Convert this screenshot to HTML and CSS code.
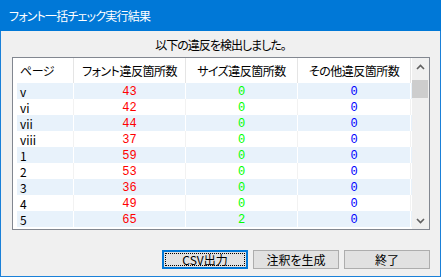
FILE: index.html
```html
<!DOCTYPE html>
<html lang="ja">

<head>
    <meta charset="utf-8">
    <title>フォント一括チェック実行結果</title>
    <link rel="stylesheet" href="styles.css">
</head>

<body>

    <div class="window">
        <div class="titlebar">フォント一括チェック実行結果</div>

        <div class="client">
            <p class="caption">以下の違反を検出しました。</p>

            <div class="listbox">
                <div class="list">
                    <div class="row head">
                        <span class="cell page">ページ</span>
                        <span class="cell">フォント違反箇所数</span>
                        <span class="cell">サイズ違反箇所数</span>
                        <span class="cell">その他違反箇所数</span>
                    </div>
                    <div class="row alt">
                        <span class="cell page">v</span>
                        <span class="cell num red">43</span>
                        <span class="cell num green">0</span>
                        <span class="cell num blue">0</span>
                    </div>
                    <div class="row">
                        <span class="cell page">vi</span>
                        <span class="cell num red">42</span>
                        <span class="cell num green">0</span>
                        <span class="cell num blue">0</span>
                    </div>
                    <div class="row alt">
                        <span class="cell page">vii</span>
                        <span class="cell num red">44</span>
                        <span class="cell num green">0</span>
                        <span class="cell num blue">0</span>
                    </div>
                    <div class="row">
                        <span class="cell page">viii</span>
                        <span class="cell num red">37</span>
                        <span class="cell num green">0</span>
                        <span class="cell num blue">0</span>
                    </div>
                    <div class="row alt">
                        <span class="cell page">1</span>
                        <span class="cell num red">59</span>
                        <span class="cell num green">0</span>
                        <span class="cell num blue">0</span>
                    </div>
                    <div class="row">
                        <span class="cell page">2</span>
                        <span class="cell num red">53</span>
                        <span class="cell num green">0</span>
                        <span class="cell num blue">0</span>
                    </div>
                    <div class="row alt">
                        <span class="cell page">3</span>
                        <span class="cell num red">36</span>
                        <span class="cell num green">0</span>
                        <span class="cell num blue">0</span>
                    </div>
                    <div class="row">
                        <span class="cell page">4</span>
                        <span class="cell num red">49</span>
                        <span class="cell num green">0</span>
                        <span class="cell num blue">0</span>
                    </div>
                    <div class="row alt">
                        <span class="cell page">5</span>
                        <span class="cell num red">65</span>
                        <span class="cell num green">2</span>
                        <span class="cell num blue">0</span>
                    </div>
                </div>

                <div class="scrollbar">
                    <div class="arrow">
                        <svg width="9" height="6" viewBox="0 0 9 6"><path d="M1 5 L4.5 1.5 L8 5" fill="none" stroke="#606060" stroke-width="1.6"/></svg>
                    </div>
                    <div class="track">
                        <div class="thumb"></div>
                    </div>
                    <div class="arrow">
                        <svg width="9" height="6" viewBox="0 0 9 6"><path d="M1 1 L4.5 4.5 L8 1" fill="none" stroke="#606060" stroke-width="1.6"/></svg>
                    </div>
                </div>
            </div>

            <div class="buttons">
                <button class="btn default"><span class="focus">CSV出力</span></button>
                <button class="btn">注釈を生成</button>
                <button class="btn">終了</button>
            </div>
        </div>
    </div>

</body></html>
```

FILE: styles.css
```css
body {
    margin: 0;
    font-family: "Noto Sans CJK JP", sans-serif;
    font-feature-settings: "palt";
    font-size: 12px;
}

.window {
    width: 441px;
    height: 277px;
    display: flex;
    flex-direction: column;
    box-sizing: border-box;
    border: 1px solid #1a80d8;
    border-top: none;
}

.titlebar {
    height: 31px;
    flex: none;
    background-color: #0078d7;
    color: #fff;
    display: flex;
    align-items: center;
    padding-left: 9px;
    margin: 0 -1px;
    letter-spacing: -0.8px;
}

.client {
    flex: 1;
    background-color: #f0f0f0;
    display: flex;
    flex-direction: column;
}

.caption {
    margin: 0;
    height: 26px;
    padding-top: 1px;
    box-sizing: border-box;
    display: flex;
    align-items: center;
    justify-content: center;
    color: #000;
    letter-spacing: -1px;
}

.listbox {
    height: 173px;
    margin-left: 11px;
    margin-right: 10px;
    box-sizing: border-box;
    border: 1px solid #828790;
    background-color: #fff;
    display: flex;
}

.list {
    flex: 1;
    padding-left: 4px;
}

.row {
    display: grid;
    grid-template-columns: 57px 112px 112px 113px;
    height: 16px;
}

.row.head {
    height: 25px;
    letter-spacing: -0.5px;
}

.row.alt {
    background-color: #e8f2fb;
}

.cell {
    display: flex;
    align-items: center;
    justify-content: center;
    border-right: 1px solid #f2f2f2;
    color: #000;
}

.row.alt .cell {
    border-right-color: #fff;
}

.row.head .cell {
    border-right-color: #e5e5e5;
}

.cell.page {
    justify-content: flex-start;
    padding-left: 3px;
}

.num {
    font-family: "Liberation Mono", monospace;
    font-size: 12px;
}

.red {
    color: #ff0000;
}

.green {
    color: #00ff00;
}

.blue {
    color: #0000ff;
}

.scrollbar {
    width: 17px;
    background-color: #f0f0f0;
    display: flex;
    flex-direction: column;
}

.arrow {
    height: 17px;
    display: flex;
    align-items: center;
    justify-content: center;
}

.track {
    flex: 1;
    padding-top: 5px;
}

.thumb {
    height: 18px;
    margin: 0 1px 0 0;
    background-color: #cdcdcd;
}

.buttons {
    display: flex;
    justify-content: flex-end;
    gap: 5px;
    margin: 20px 10px 0 0;
}

.btn {
    width: 86px;
    height: 19px;
    padding: 0;
    border: 1px solid #adadad;
    background-color: #e1e1e1;
    font-family: "Noto Sans CJK JP", sans-serif;
    font-feature-settings: "palt";
    font-size: 12px;
    color: #000;
    display: flex;
    align-items: center;
    justify-content: center;
}

.btn.default {
    border: 2px solid #0078d7;
}

.focus {
    flex: 1;
    align-self: stretch;
    display: flex;
    align-items: center;
    justify-content: center;
    margin: 1px;
    border: 1px dotted #000;
}
```
